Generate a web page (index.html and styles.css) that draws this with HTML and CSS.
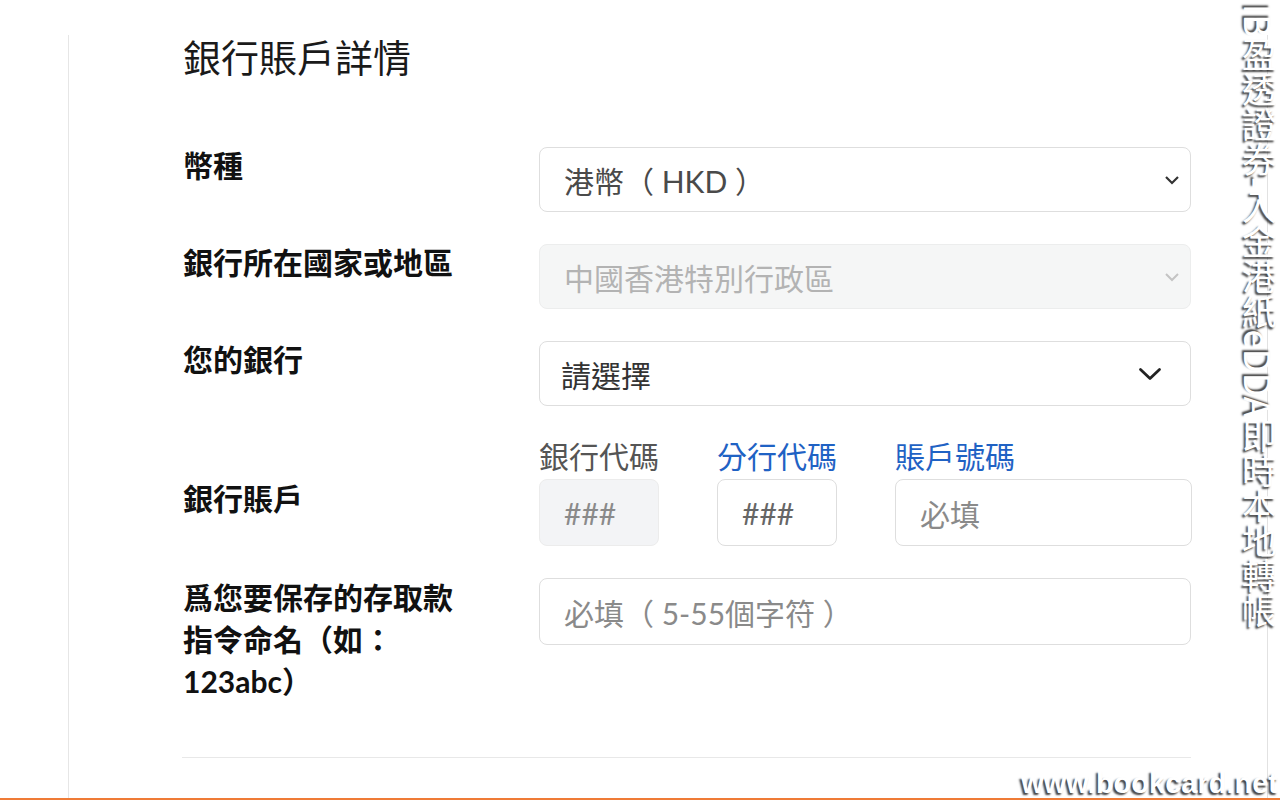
FILE: index.html
```html
<!DOCTYPE html>
<html lang="zh-Hant">
<head>
    <meta charset="UTF-8">
    <meta name="viewport" content="width=device-width, initial-scale=1.0">
    <title>銀行賬戶詳情</title>
    <link rel="stylesheet" href="styles.css">
</head>
<body>
    <div class="page">
        <div class="panel">
            <h1 class="title">銀行賬戶詳情</h1>

            <div class="row">
                <div class="label">幣種</div>
                <div class="select">
                    <span class="value">港幣（ HKD ）</span>
                    <svg class="chev" width="16" height="10" viewBox="0 0 16 10"><path d="M2 2l6 6 6-6" fill="none" stroke="#333" stroke-width="2.2"/></svg>
                </div>
            </div>

            <div class="row">
                <div class="label">銀行所在國家或地區</div>
                <div class="select disabled">
                    <span class="value">中國香港特別行政區</span>
                    <svg class="chev" width="16" height="10" viewBox="0 0 16 10"><path d="M2 2l6 6 6-6" fill="none" stroke="#c4c4c4" stroke-width="2"/></svg>
                </div>
            </div>

            <div class="row">
                <div class="label">您的銀行</div>
                <div class="select wide-chev">
                    <span class="value dark">請選擇</span>
                    <svg class="chev-lg" width="24" height="14" viewBox="0 0 24 14"><path d="M2.5 2.5l9.5 9 9.5-9" fill="none" stroke="#222" stroke-width="2.8" stroke-linecap="round" stroke-linejoin="round"/></svg>
                </div>
            </div>

            <div class="row center">
                <div class="label low">銀行賬戶</div>
                <div class="account">
                    <div class="sub">銀行代碼</div>
                    <div class="sub link">分行代碼</div>
                    <div class="sub link">賬戶號碼</div>
                    <div class="input grey"><span class="ph">###</span></div>
                    <div class="input"><span class="ph dark">###</span></div>
                    <div class="input"><span class="ph">必填</span></div>
                </div>
            </div>

            <div class="row">
                <div class="label multi">爲您要保存的存取款指令命名（如：123abc）</div>
                <div class="input"><span class="ph">必填（ 5-55個字符 ）</span></div>
            </div>

            <hr class="divider">
        </div>
    </div>

    <div class="mark-side">IB盈透證券-入金港紙eDDA即時本地轉帳</div>
    <div class="mark-bottom">www.bookcard.net</div>
</body>
</html>
```

FILE: styles.css
```css
body {
    margin: 0;
    background-color: #fff;
    font-family: Lato, "Noto Sans CJK TC", sans-serif;
    color: #111;
    height: 800px;
    overflow: hidden;
    position: relative;
}

.page {
    height: 800px;
    border-right: 1px solid #e2e2e2;
    width: 1268px;
    box-sizing: border-box;
}

.panel {
    margin-left: 68px;
    margin-top: 35px;
    border-left: 1px solid #e6e6e6;
    padding-left: 114px;
    height: 765px;
    box-sizing: border-box;
    width: 1124px;
}

.title {
    margin: 0 0 67px;
    font-size: 38px;
    font-weight: 400;
    line-height: 45px;
    color: #1a1a1a;
}

.row {
    display: grid;
    grid-template-columns: 356px 652px;
    align-items: start;
    margin-bottom: 32px;
}

.row.center {
    align-items: center;
}

.label {
    font-size: 30px;
    font-weight: 700;
    line-height: 42px;
    margin-top: -3px;
}

.label.low {
    margin-top: 12px;
}

.label.multi {
    max-width: 290px;
    margin-top: -2px;
}

.select,
.input {
    height: 65px;
    box-sizing: border-box;
    border: 1px solid #dedede;
    border-radius: 8px;
    display: flex;
    align-items: center;
    justify-content: space-between;
    padding: 0 10px 0 24px;
    font-size: 30px;
    background-color: #fff;
}

.select.disabled {
    background-color: #f5f6f6;
    border-color: #eceded;
}

.select.wide-chev {
    padding: 0 28px 0 21px;
}

.value {
    color: #4a4a4a;
}

.value.dark {
    color: #333;
}

.disabled .value {
    color: #b3b3b3;
}

.account {
    display: grid;
    grid-template-columns: 120px 120px 297px;
    column-gap: 58px;
    row-gap: 5px;
}

.sub {
    font-size: 30px;
    line-height: 36px;
    color: #555;
}

.sub.link {
    color: #1f62c4;
}

.input {
    height: 67px;
}

.input.grey {
    background-color: #f3f4f6;
    border-color: #ececec;
}

.ph {
    color: #8a8a8a;
}

.ph.dark {
    color: #666;
}

.divider {
    margin: 55px 0 0 -1px;
    width: 1009px;
    border: none;
    border-top: 1px solid #e8e8e8;
}

.mark-side {
    position: absolute;
    top: 4px;
    right: 2px;
    writing-mode: vertical-rl;
    font-family: "Noto Sans CJK TC", sans-serif;
    font-size: 35px;
    line-height: 38px;
    color: #fff;
    text-shadow: -2px 2px 2px rgba(0, 0, 0, 0.75);
}

.mark-bottom {
    position: absolute;
    right: 2px;
    bottom: 1px;
    font-family: "Liberation Sans", Arial, sans-serif;
    font-weight: 700;
    font-size: 29px;
    line-height: 32px;
    color: #fff;
    text-shadow: -2px 2px 2px rgba(0, 0, 0, 0.75);
}

body::after {
    content: "";
    position: absolute;
    left: 0;
    right: 0;
    bottom: 0;
    height: 2px;
    background-color: #ef7b36;
}
```
